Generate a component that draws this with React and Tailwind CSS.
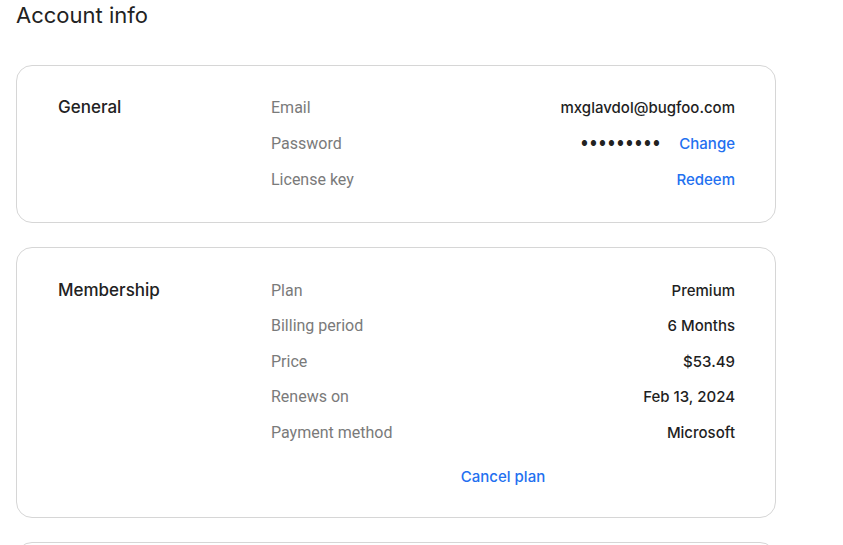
import React from 'react';

const label = "text-[16px] text-[#7a7a7a] font-['Roboto',sans-serif]";
const value = "text-[15px] font-medium text-[#1f1f1f] font-['Inter',sans-serif]";
const link = "text-[15px] font-medium text-[#2370f0] font-['Inter',sans-serif]";

function Row({ name, children, h = 'h-9' }) {
  return (
    <div className={`flex items-center justify-between ${h}`}>
      <span className={label}>{name}</span>
      <div className="flex items-center gap-[17px]">{children}</div>
    </div>
  );
}

function Card({ title, children, className = '' }) {
  return (
    <div className={`w-[760px] rounded-2xl border border-[#d6d6d6] bg-white flex pl-[41px] pr-[40px] ${className}`}>
      <div className="w-[213px] h-9 flex items-center">
        <span className="text-[17px] font-medium text-[#222] font-['Inter',sans-serif]">{title}</span>
      </div>
      <div className="flex-1">{children}</div>
    </div>
  );
}

export default function App() {
  return (
    <div className="w-[843px] h-[545px] overflow-hidden bg-white pl-4 font-['Inter',sans-serif]">
      <h1 className="text-[22px] text-[#222] leading-none pt-[4px] font-['Inter',sans-serif]">Account info</h1>
      <div className="mt-[39px] flex flex-col gap-6">
        <Card title="General" className="pt-[24px] pb-[24px]">
          <Row name="Email">
            <span className={value}>mxglavdol@bugfoo.com</span>
          </Row>
          <Row name="Password">
            <span className="text-[#222] text-[7px] tracking-[2.6px]">●●●●●●●●●</span>
            <a className={link}>Change</a>
          </Row>
          <Row name="License key">
            <a className={link}>Redeem</a>
          </Row>
        </Card>
        <Card title="Membership" className="pt-[25px] pb-[29px]">
          <Row name="Plan" h="h-[35.5px]">
            <span className={value}>Premium</span>
          </Row>
          <Row name="Billing period" h="h-[35.5px]">
            <span className={value}>6 Months</span>
          </Row>
          <Row name="Price" h="h-[35.5px]">
            <span className={value}>$53.49</span>
          </Row>
          <Row name="Renews on" h="h-[35.5px]">
            <span className={value}>Feb 13, 2024</span>
          </Row>
          <Row name="Payment method" h="h-[35.5px]">
            <span className={value}>Microsoft</span>
          </Row>
          <div className="mt-[17px] h-5 flex items-center justify-center">
            <a className={`${link} text-[15px]`}>Cancel plan</a>
          </div>
        </Card>
        <Card title="" className="h-10" />
      </div>
    </div>
  );
}
